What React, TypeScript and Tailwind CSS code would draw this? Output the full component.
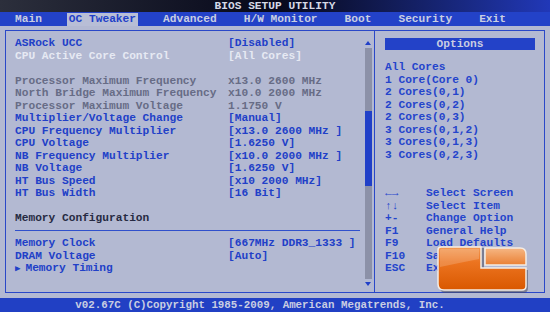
type Tone = 'blue' | 'hi' | 'gray' | 'dark';

type Row = { label?: string; value?: string; tone?: Tone; line?: boolean; arrow?: boolean };

const rows: Row[] = [
  { label: 'ASRock UCC', value: '[Disabled]', tone: 'blue' },
  { label: 'CPU Active Core Control', value: '[All Cores]', tone: 'hi' },
  {},
  { label: 'Processor Maximum Frequency', value: 'x13.0 2600 MHz', tone: 'gray' },
  { label: 'North Bridge Maximum Frequency', value: 'x10.0 2000 MHz', tone: 'gray' },
  { label: 'Processor Maximum Voltage', value: '1.1750 V', tone: 'gray' },
  { label: 'Multiplier/Voltage Change', value: '[Manual]', tone: 'blue' },
  { label: 'CPU Frequency Multiplier', value: '[x13.0 2600 MHz ]', tone: 'blue' },
  { label: 'CPU Voltage', value: '[1.6250 V]', tone: 'blue' },
  { label: 'NB Frequency Multiplier', value: '[x10.0 2000 MHz ]', tone: 'blue' },
  { label: 'NB Voltage', value: '[1.6250 V]', tone: 'blue' },
  { label: 'HT Bus Speed', value: '[x10 2000 MHz]', tone: 'blue' },
  { label: 'HT Bus Width', value: '[16 Bit]', tone: 'blue' },
  {},
  { label: 'Memory Configuration', tone: 'dark' },
  { line: true },
  { label: 'Memory Clock', value: '[667MHz DDR3_1333 ]', tone: 'blue' },
  { label: 'DRAM Voltage', value: '[Auto]', tone: 'blue' },
  { label: 'Memory Timing', tone: 'blue', arrow: true },
];

const toneClass: Record<Tone, string> = {
  blue: 'text-[#2140c8]',
  hi: 'text-[#e6e9f3]',
  gray: 'text-[#676c86]',
  dark: 'text-[#262a42]',
};

const tabs = ['Main', 'OC Tweaker', 'Advanced', 'H/W Monitor', 'Boot', 'Security', 'Exit'];

const options = [
  'All Cores',
  '1 Core(Core 0)',
  '2 Cores(0,1)',
  '2 Cores(0,2)',
  '2 Cores(0,3)',
  '3 Cores(0,1,2)',
  '3 Cores(0,1,3)',
  '3 Cores(0,2,3)',
];

const keys = [
  ['\u2190\u2192', 'Select Screen'],
  ['\u2191\u2193', 'Select Item'],
  ['+-', 'Change Option'],
  ['F1', 'General Help'],
  ['F9', 'Load Defaults'],
  ['F10', 'Save and Exit'],
  ['ESC', 'Exit'],
];

function Logo() {
  return (
    <svg width="96" height="50" viewBox="0 0 96 50" className="absolute left-[435px] top-[245px]">
      <defs>
        <linearGradient id="lg" x1="0" y1="0" x2="0" y2="1">
          <stop offset="0" stopColor="#f39a55" />
          <stop offset="0.35" stopColor="#ec7420" />
          <stop offset="1" stopColor="#d95800" />
        </linearGradient>
        <linearGradient id="rg" x1="0" y1="0" x2="0" y2="1">
          <stop offset="0" stopColor="#f6b784" />
          <stop offset="1" stopColor="#ea8034" />
        </linearGradient>
      </defs>
      <path d="M5 7 Q5 3 9 3 H49 V25 H93 V43 Q93 48 88 48 H11 Q5 48 5 42 Z" fill="#4a4d5c" opacity="0.55" />
      <path d="M3 5 Q3 2 6 2 H46 V23 H91 V41 Q91 45 87 45 H9 Q3 45 3 39 Z" fill="url(#lg)" stroke="#f4ede6" strokeWidth="1.5" />
      <path d="M50 3 H85 Q91 3 91 9 V20 H50 Z" fill="url(#rg)" stroke="#f4ede6" strokeWidth="1.5" />
      <path d="M5 5 Q5 4 7 4 H44 V14 Q24 18 5 22 Z" fill="#ffffff" opacity="0.18" />
    </svg>
  );
}

export default function App() {
  return (
    <div className="relative flex h-[312px] w-[550px] flex-col overflow-hidden bg-[#b3b9d2] font-['Liberation_Mono','DejaVu_Sans_Mono',monospace] text-[11.2px] font-bold">
      <div className="flex h-[12px] items-center justify-center bg-gradient-to-r from-[#2c2f3c] via-[#07081a] to-[#2138b8] leading-[12px] text-[#d6d9e6]">
        BIOS SETUP UTILITY
      </div>

      <div className="flex h-[14px] items-center gap-[27px] bg-[#2342c8] pl-[15px] leading-[13px] text-[#c9cee2]">
        {tabs.map((t) => (
          <span key={t} className={t === 'OC Tweaker' ? '-mx-[2px] bg-[#b8bed6] px-[2px] text-[#2140c8]' : ''}>
            {t}
          </span>
        ))}
      </div>

      <div className="flex flex-1 px-[5px] pb-[5px] pt-[4px]">
        <div className="flex w-[370px] border border-[#2a48c8]">
          <div className="flex-1 pl-[9px] pt-[6px] leading-[12.5px]">
            {rows.map((r, i) =>
              r.line ? (
                <div key={i} className="flex h-[12.5px] items-center">
                  <div className="w-[345px] border-t border-[#3050cc]" />
                </div>
              ) : (
                <div key={i} className={`flex h-[12.5px] whitespace-pre ${r.tone ? toneClass[r.tone] : ''}`}>
                  <span className="w-[213px]">
                    {r.arrow && <span className="mr-[5px] text-[9px]">{'\u25B6'}</span>}
                    {r.label}
                  </span>
                  <span>{r.value}</span>
                </div>
              )
            )}
          </div>
          <div className="mr-[2px] flex w-[8px] flex-col items-center pb-[6px] pt-[10px]">
            <div className="h-0 w-0 border-x-[3px] border-b-[4px] border-x-transparent border-b-[#2140c8]" />
            <div className="mt-[3px] w-[7px] flex-1 bg-[#8c91a8] pt-[63px]">
              <div className="h-[75px] w-full bg-[#2140c8]" />
            </div>
            <div className="mt-[3px] h-0 w-0 border-x-[3px] border-t-[4px] border-x-transparent border-t-[#2140c8]" />
          </div>
        </div>

        <div className="flex flex-1 flex-col border border-l-0 border-[#2a48c8] text-[#2444cc]">
          <div className="ml-[10px] mr-[9px] mt-[7px] flex h-[12px] items-center justify-center bg-[#2342c8] leading-[12px] text-[#c9cee2]">
            Options
          </div>
          <div className="ml-[10px] mt-[11px] leading-[12.5px]">
            {options.map((o) => (
              <div key={o} className="h-[12.5px] whitespace-pre">
                {o}
              </div>
            ))}
          </div>
          <div className="ml-[10px] mt-[26px] leading-[12.5px]">
            {keys.map(([k, d]) => (
              <div key={k} className="flex h-[12.5px] whitespace-pre">
                <span className="w-[41px]">{k}</span>
                <span>{d}</span>
              </div>
            ))}
          </div>
        </div>
      </div>

      <div className="flex h-[14px] items-center justify-center bg-[#2140c4] pr-[30px] text-[10.8px] leading-[14px] text-[#c9cee2]">
        v02.67C (C)Copyright 1985-2009, American Megatrends, Inc.
      </div>

      <Logo />
    </div>
  );
}
